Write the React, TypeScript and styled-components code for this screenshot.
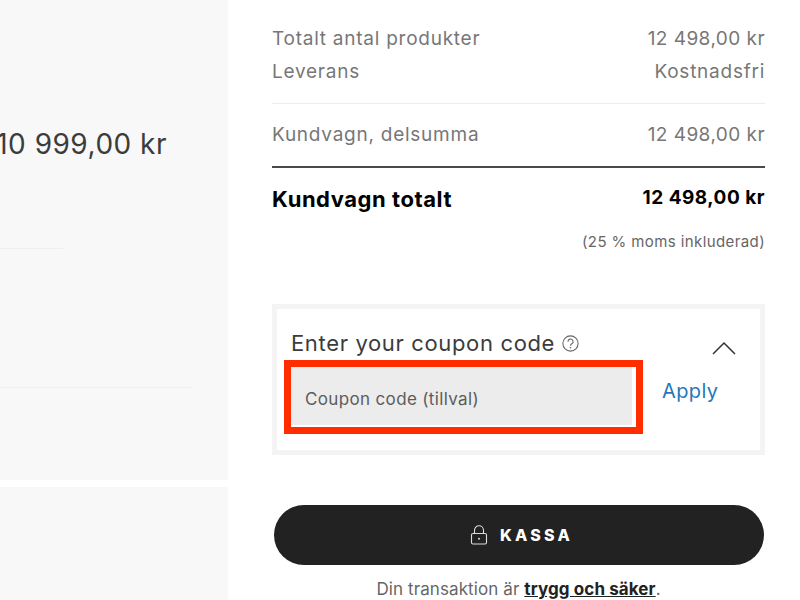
import React from 'react';
import styled, { createGlobalStyle } from 'styled-components';

const GlobalStyle = createGlobalStyle`
  html, body {
    margin: 0;
    padding: 0;
    background: #fff;
    overflow: hidden;
  }
  * {
    box-sizing: border-box;
  }
`;

const App: React.FC = () => {
  return (
    <>
      <GlobalStyle />
      <Page>
        <LeftColumn>
          <ProductPanel>
            <ProductPrice>10 999,00 kr</ProductPrice>
            <ShortDivider />
            <LongDivider />
          </ProductPanel>
          <NextPanel />
        </LeftColumn>
        <Summary>
          <SummaryRow>
            <span>Totalt antal produkter</span>
            <AmountText>12 498,00 kr</AmountText>
          </SummaryRow>
          <SummaryRow>
            <span>Leverans</span>
            <span>Kostnadsfri</span>
          </SummaryRow>
          <LightRule />
          <SubtotalRow>
            <span>Kundvagn, delsumma</span>
            <AmountText>12 498,00 kr</AmountText>
          </SubtotalRow>
          <DarkRule />
          <TotalRow>
            <TotalLabel>Kundvagn totalt</TotalLabel>
            <TotalValue>12 498,00 kr</TotalValue>
          </TotalRow>
          <TaxNote>(25 % moms inkluderad)</TaxNote>
          <CouponBox>
            <CouponHeader>
              <CouponTitle>
                Enter your coupon code
                <HelpIcon viewBox="0 0 16 16">
                  <circle cx="8" cy="8" r="7.2" fill="none" stroke="#666" strokeWidth="1" />
                  <path d="M5.6 6.3a2.4 2.4 0 1 1 3.6 2c-.8.5-1.2.9-1.2 1.7" fill="none" stroke="#666" strokeWidth="1" />
                  <circle cx="8" cy="12" r=".75" fill="#666" />
                </HelpIcon>
              </CouponTitle>
              <Chevron viewBox="0 0 24 14">
                <path d="M1 13 12 2l11 11" fill="none" stroke="#333" strokeWidth="1.5" />
              </Chevron>
            </CouponHeader>
            <CouponForm>
              <Highlight>
                <CouponInput placeholder="Coupon code (tillval)" />
              </Highlight>
              <ApplyLink>Apply</ApplyLink>
            </CouponForm>
          </CouponBox>
          <CheckoutButton>
            <svg width="18" height="20" viewBox="0 0 18 20">
              <rect x="1.5" y="8.5" width="15" height="10.5" rx="1.5" fill="none" stroke="#ddd" strokeWidth="1.1" />
              <path d="M4.5 8.5V5.2a4.5 4.5 0 0 1 9 0v3.3" fill="none" stroke="#ddd" strokeWidth="1.1" />
              <circle cx="9" cy="13.8" r="1" fill="#ddd" />
            </svg>
            KASSA
          </CheckoutButton>
          <SafeNote>
            Din transaktion är <SafeLink>trygg och säker</SafeLink>.
          </SafeNote>
        </Summary>
      </Page>
    </>
  );
};

export default App;

const Page = styled.div`
  display: flex;
  width: 800px;
  height: 600px;
  overflow: hidden;
  font-family: Inter, "Liberation Sans", sans-serif;
`;

const LeftColumn = styled.div`
  display: flex;
  flex-direction: column;
  flex: 0 0 228px;
  gap: 7px;
  overflow: hidden;
`;

const ProductPanel = styled.div`
  flex: 0 0 480px;
  padding-top: 127px;
  background: #f8f8f8;
`;

const NextPanel = styled.div`
  flex: 1;
  background: #f8f8f8;
`;

const ProductPrice = styled.div`
  width: 167px;
  height: 34px;
  display: flex;
  justify-content: flex-end;
  align-items: center;
  white-space: nowrap;
  font-size: 28px;
  font-weight: 400;
  letter-spacing: 0.5px;
  color: #3c3c3c;
`;

const ShortDivider = styled.div`
  width: 63px;
  height: 1px;
  margin-top: 87px;
  background: #eeeeee;
`;

const LongDivider = styled.div`
  width: 192px;
  height: 1px;
  margin-top: 138px;
  background: #eeeeee;
`;

const Summary = styled.div`
  display: flex;
  flex-direction: column;
  width: 493px;
  margin-left: 44px;
  padding-top: 22px;
`;

const SummaryRow = styled.div`
  display: flex;
  justify-content: space-between;
  align-items: center;
  height: 33px;
  font-size: 19px;
  letter-spacing: 0.75px;
  color: #777;
`;

const AmountText = styled.span`
  letter-spacing: 0.45px;
`;

const LightRule = styled.div`
  height: 1px;
  margin-top: 15px;
  background: #ececec;
`;

const SubtotalRow = styled(SummaryRow)`
  margin-top: 14px;
`;

const DarkRule = styled.div`
  height: 2px;
  margin-top: 15px;
  background: #4a4a4a;
`;

const TotalRow = styled.div`
  display: flex;
  justify-content: space-between;
  align-items: center;
  height: 33px;
  margin-top: 14px;
  color: #000;
  font-weight: 700;
`;

const TotalLabel = styled.span`
  font-size: 22px;
  letter-spacing: 0.55px;
`;

const TotalValue = styled.span`
  font-size: 19px;
  letter-spacing: 0.5px;
  margin-top: -3px;
`;

const TaxNote = styled.div`
  margin-top: 17px;
  height: 20px;
  line-height: 20px;
  text-align: right;
  font-size: 15px;
  letter-spacing: 0.4px;
  color: #666;
`;

const CouponBox = styled.div`
  height: 151px;
  margin-top: 52px;
  padding: 21px 0 0 7px;
  border: 5px solid #f4f4f4;
  background: #fff;
`;

const CouponHeader = styled.div`
  display: flex;
  justify-content: space-between;
  align-items: flex-start;
  height: 30px;
  padding: 0 24px 0 7px;
`;

const CouponTitle = styled.div`
  display: flex;
  align-items: center;
  gap: 7px;
  height: 26px;
  font-size: 22px;
  letter-spacing: 0.65px;
  color: #3c3c3c;
`;

const HelpIcon = styled.svg`
  width: 17px;
  height: 17px;
`;

const Chevron = styled.svg`
  width: 24px;
  height: 14px;
  margin-top: 11px;
`;

const CouponForm = styled.div`
  display: flex;
  align-items: flex-start;
  gap: 19px;
`;

const Highlight = styled.div`
  width: 359px;
  height: 74px;
  padding: 0 4px 2px 0;
  border: 7px solid #ff2d00;
  background: #fff;
`;

const CouponInput = styled.input`
  display: block;
  width: 100%;
  height: 100%;
  padding: 6px 14px 0;
  border: none;
  outline: none;
  background: #ececec;
  font-family: inherit;
  font-size: 17px;
  letter-spacing: 0.35px;
  color: #555;

  &::placeholder {
    color: #5c5c5c;
    opacity: 1;
  }
`;

const ApplyLink = styled.a`
  margin-top: 19px;
  font-size: 20px;
  letter-spacing: 0.4px;
  color: #1f7ab8;
`;

const CheckoutButton = styled.button`
  display: flex;
  justify-content: center;
  align-items: center;
  gap: 12px;
  width: 490px;
  height: 60px;
  margin: 50px 0 0 2px;
  padding: 0 0 0 5px;
  border: none;
  border-radius: 30px;
  background: #222222;
  color: #fff;
  font-family: inherit;
  font-size: 16px;
  font-weight: 800;
  letter-spacing: 3.2px;
`;

const SafeNote = styled.div`
  margin-top: 14px;
  text-align: center;
  font-size: 17px;
  letter-spacing: 0.1px;
  color: #666;
`;

const SafeLink = styled.a`
  color: #222;
  font-weight: 700;
  text-decoration: underline;
`;
